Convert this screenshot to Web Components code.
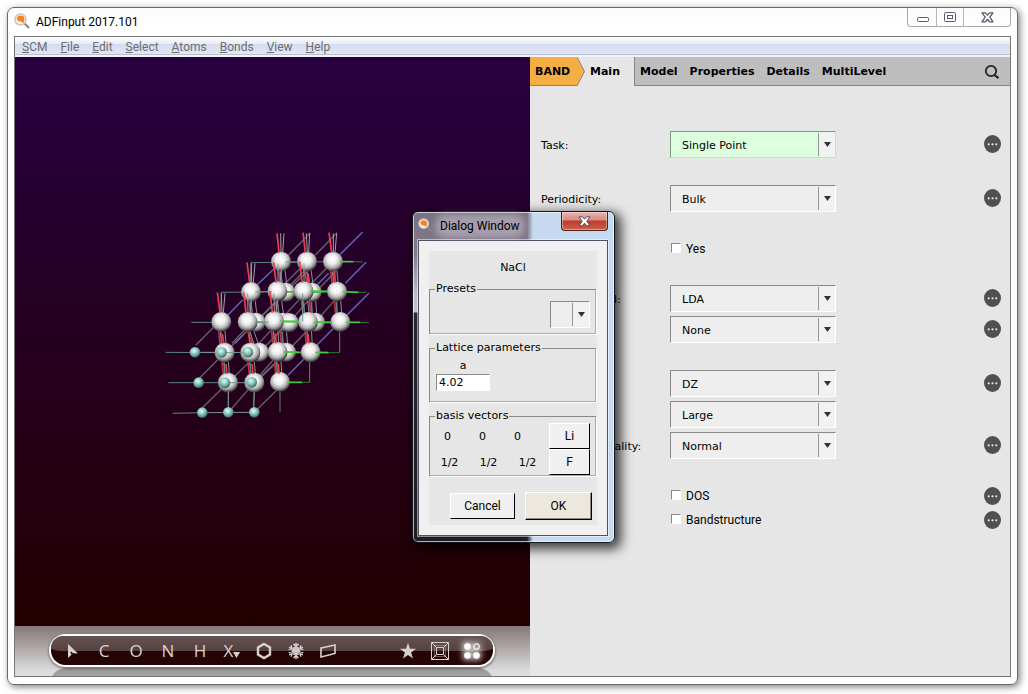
<!DOCTYPE html>
<html lang="en">
<head>
<meta charset="utf-8">
<title>ADFinput 2017.101</title>
<style>
html, body { margin: 0; background: #fff; }
body { font: 12px/16px Roboto, "Noto Sans", sans-serif; color: #000; }
</style>
</head>
<body>
<adf-window heading="ADFinput 2017.101">
  <adf-menubar slot="menu" items="SCM,File,Edit,Select,Atoms,Bonds,View,Help"></adf-menubar>
  <adf-viewer></adf-viewer>
  <adf-panel>
    <adf-tabs slot="tabs" items="Model,Properties,Details,MultiLevel"></adf-tabs>
    <adf-group>
      <adf-field label="Task:" value="Single Point" tone="changed" more></adf-field>
    </adf-group>
    <adf-group>
      <adf-field label="Periodicity:" value="Bulk" more></adf-field>
    </adf-group>
    <adf-group>
      <adf-check label="Yes"></adf-check>
    </adf-group>
    <adf-group>
      <adf-field label="XC &nbsp;functional:" value="LDA" more></adf-field>
      <adf-field name="Relativity" value="None" more></adf-field>
    </adf-group>
    <adf-group>
      <adf-field name="Basis set" value="DZ" more></adf-field>
      <adf-field name="Frozen core" value="Large"></adf-field>
      <adf-field label="Numerical quality:" value="Normal" more></adf-field>
    </adf-group>
    <adf-group class="checks">
      <adf-check label="DOS" more></adf-check>
      <adf-check label="Bandstructure" more></adf-check>
    </adf-group>
  </adf-panel>
  <adf-dialog slot="dialog" heading="Dialog Window"></adf-dialog>
</adf-window>

<script>
const define = (name, render) => customElements.define(name, class extends HTMLElement {
  constructor() {
    super();
    this.attachShadow({ mode: 'open' });
  }
  connectedCallback() {
    this.shadowRoot.innerHTML = render(this);
  }
});

const base = `
  * { box-sizing: border-box; }
  button { font: inherit; color: inherit; background: none; border: 0; padding: 0; margin: 0; }
  svg { display: block; }
`;

const logo = `<svg width="16" height="16" viewBox="0 0 16 16" aria-hidden="true">
  <path d="M10.500 10.500 15 15" stroke="#8b8682" stroke-width="2"/>
  <circle cx="6.500" cy="6.500" r="5.500" fill="#f6f3ef" stroke="#c4c2c0" stroke-width="1.400"/>
  <path d="M2.500 5 5 2.500 9.500 3 10.500 6.500 9.500 10 7 8.500 4 8Z" fill="#f5821f"/>
</svg>`;

/* ---------- main window ---------- */
define('adf-window', el => `
<style>${base}
  :host { display: flex; flex-direction: column; min-height: 100vh; box-sizing: border-box; padding: 7px 10px 9px 7px; position: relative; }
  .frame { flex: 1; display: flex; flex-direction: column; padding: 0 6px 7px; border: 1px solid #696969; border-radius: 7px; background: linear-gradient(#fcfcfc, #fff 20px); box-shadow: 2px 2px 7px rgba(0,0,0,.5); }
  header { height: 28px; display: flex; align-items: flex-start; gap: 6px; }
  .logo { margin-top: 5px; }
  h1 { flex: 1; margin: 6px 0 0; font: inherit; }
  .controls { display: flex; height: 19px; border: 1px solid #a9a9a9; border-top: 0; border-radius: 0 0 4px 4px; }
  .controls button { display: grid; place-items: center; width: 28px; }
  .controls button + button { width: 27px; border-left: 1px solid #b5b5b5; }
  .controls button:last-child { width: 47px; }
  .client { flex: 1; display: grid; grid-template: auto 1fr / 515fr 480fr; border: 1px solid #777; }
  slot[name=menu]::slotted(*) { grid-column: 1 / -1; }
</style>
<div class="frame">
  <header>
    <span class="logo">${logo}</span>
    <h1>${el.getAttribute('heading')}</h1>
    <div class="controls">
      <button aria-label="Minimize"><svg width="13" height="11"><rect x="1.500" y="5.500" width="11" height="4" rx="1" fill="#fff" stroke="#575b6b"/></svg></button>
      <button aria-label="Maximize"><svg width="13" height="11"><rect x=".5" y=".5" width="11" height="9" rx="1" fill="#fff" stroke="#575b6b"/><rect x="3.500" y="3.500" width="5" height="3" fill="#fff" stroke="#575b6b"/></svg></button>
      <button aria-label="Close"><svg width="13" height="11" viewBox="0 0 13 11"><path d="M1 .8h3.500l2 2.400 2-2.400H12L8.800 5.200 12 9.800H8.500l-2-2.600-2 2.600H1l3.200-4.600Z" fill="#fff" stroke="#575b6b" stroke-width="1.300" stroke-linejoin="round"/></svg></button>
    </div>
  </header>
  <div class="client"><slot name="menu"></slot><slot></slot></div>
</div>
<slot name="dialog"></slot>`);

define('adf-menubar', el => `
<style>${base}
  :host { display: block; color: #6d6d6d; }
  nav { display: flex; gap: 13px; height: 20px; padding: 2px 7px 0; background: linear-gradient(#fff, #e7ebf6 7px, #d5dcf0 7px, #e0e6f5 17px, #b6bcd4 17px, #b6bcd4 18px, #f4f4f8 18px); }
  button { height: 16px; }
</style>
<nav>${el.getAttribute('items').split(',').map(t => `<button><u>${t[0]}</u>${t.slice(1)}</button>`).join('')}</nav>`);

/* ---------- 3D viewer ---------- */
// Scene coordinates are three units to one screen pixel.
const scene = () => {
  const line = (c, w, list) => `<g stroke="${c}" stroke-width="${w}">${list.map(([a, b, x, y]) => `<path d="M${a} ${b}L${x} ${y}"/>`).join('')}</g>`;
  const balls = (fill, r, list) => list.map(([x, y]) => `<circle cx="${x}" cy="${y}" r="${r}" fill="url(#${fill})"/>`).join('');
  const front = [[377,125],[455,125],[533,125],[287,216],[366,214],[445,214],[545,215],[198,306],[277,306],[356,304],[458,306],[555,306],[208,398],[285,398],[367,396],[466,397],[218,488],[297,488],[374,486]];
  const back = [[391,217],[470,217],[302,307],[382,307],[401,308],[480,307],[312,397],[393,397]];
  const small = [[119,397],[199,397],[278,396],[130,488],[209,488],[289,487],[141,578],[219,577],[297,577]];
  const bonds = [[377,125,391,217],[455,125,470,217],[533,125,545,215],[287,216,302,307],[366,214,382,307],[445,214,458,306],[470,217,480,307],[545,215,555,306],[198,306,208,398],[277,306,312,397],[356,304,367,396],[382,307,393,397],[458,306,466,397],[208,398,218,488],[285,398,297,488],[367,396,374,486]];
  const shift = (d, e) => bonds.map(([a, b, x, y]) => [a + d, b, x + e, y]);
  return `
  ${line('#6a606f', 4, [[122,375,190,306],[132,475,208,398],[208,398,302,307],[302,307,391,217],[391,217,470,140],[141,563,218,488],[218,488,312,397],[312,397,401,308],[401,308,480,217],[480,217,545,150],[219,577,297,488],[297,488,393,397],[393,397,480,307],[480,307,560,215],[297,577,374,500],[300,488,382,410],[285,398,366,310],[240,368,356,250],[366,310,458,210],[400,105,465,38],[480,105,545,38],[366,214,455,125],[445,214,533,125],[400,200,455,145],[230,370,287,310],[310,470,367,405]])}
  ${line('#6967bd', 4, [[555,103,622,36],[570,190,632,127],[575,285,641,219],[215,288,262,240],[305,195,366,137],[398,466,466,397],[485,375,535,325],[240,370,262,345],[485,195,520,160]])}
  ${line('#918998', 3, [...shift(-6, -6), ...shift(9, 6)])}
  ${line('#5c8580', 3, [...shift(-1, -10), [287,128,533,125],[198,217,445,214],[108,307,198,307],[31,397,208,398],[39,488,218,488],[52,580,141,578],[287,128,284,216],[198,217,195,306],[553,306,553,397],[463,397,463,487],[374,486,374,575],[219,488,219,577],[297,488,295,577]])}
  ${balls('white-ball', 29, back)}
  ${line('#ba3545', 5, [...shift(-10, -12)])}
  ${line('#39bd36', 5, [[366,214,440,217],[470,217,540,213],[287,306,350,307],[360,304,455,306],[458,306,550,308],[367,396,466,398]])}
  ${balls('white-ball', 30, front)}
  ${line('#ee3f50', 5, [[365,40,371,98],[443,38,450,98],[521,38,529,98],[275,127,283,188],[355,127,362,188],[433,125,440,188],[186,217,194,278],[265,217,272,278],[344,215,351,278],[201,342,205,370],[280,342,284,370],[360,340,363,370],[212,432,214,462],[290,432,293,462],[369,432,371,462],[458,342,461,370],[537,152,540,188],[458,160,462,188]])}
  ${line('#a4a0aa', 3, [[376,40,377,98],[386,40,382,98],[453,40,456,98],[463,40,460,98],[534,40,534,98],[544,40,539,98],[288,130,289,188],[299,130,294,188],[368,130,368,188],[378,150,374,188],[446,130,446,188],[198,220,200,278],[209,220,204,278],[277,220,278,278],[288,240,284,278],[356,220,357,278],[366,240,362,278]])}
  ${line('#42cb3e', 5, [[555,125,595,125],[562,215,610,217],[572,307,615,307],[480,397,520,398],[395,487,440,487],[465,213,515,214],[385,396,430,397],[375,304,430,304],[475,307,530,307]])}
  ${line('#317b31', 3, [[595,125,622,126],[610,217,632,217],[615,307,641,308],[520,398,553,398],[440,487,463,487]])}
  ${line('#779591', 3, [[209,398,270,397],[218,488,280,488],[155,578,285,577],[119,397,190,397],[300,307,340,306],[219,515,219,560],[297,515,295,560],[442,220,442,305],[300,216,350,215],[390,126,430,126]])}
  ${balls('teal-ball', 16, small)}`;
};

define('adf-viewer', () => `
<style>${base}
  :host { display: flex; flex-direction: column; min-width: 0; }
  .scene { flex: 1; display: grid; place-items: center; padding-bottom: 34px; background: linear-gradient(#280040, #220000); }
</style>
<div class="scene">
  <svg width="235" height="210" viewBox="-1 0 705 630" role="img" aria-label="Crystal structure" fill="none">
    <defs>
      <radialGradient id="white-ball" cx=".46" cy=".38" r=".6"><stop offset="0" stop-color="#fff"/><stop offset=".4" stop-color="#eee"/><stop offset=".7" stop-color="#b2b2b2"/><stop offset=".9" stop-color="#606060"/><stop offset="1" stop-color="#2c2c2c"/></radialGradient>
      <radialGradient id="teal-ball" cx=".42" cy=".36" r=".65"><stop offset="0" stop-color="#d8fff6"/><stop offset=".4" stop-color="#98d3c8"/><stop offset=".8" stop-color="#5b9087"/><stop offset="1" stop-color="#2a4a46"/></radialGradient>
    </defs>${scene()}
  </svg>
</div>
<adf-toolbar></adf-toolbar>`);

define('adf-toolbar', () => {
  const arm = [0, 60, 120, 180, 240, 300].map(a => `<path transform="rotate(${a} 9 9)" d="M9 9V1M6.500 2 9 4.500 11.500 2M7 5.200 9 7.200 11 5.200"/>`).join('');
  return `
<style>${base}
  :host { display: block; color: #d9d1d1; }
  .shelf { height: 50px; padding: 8px 35px 0 34px; overflow: hidden; background: linear-gradient(#857777, #dcdcdc 90%); }
  .pill { position: relative; display: flex; justify-content: space-between; height: 33px; padding: 0 5px; border: 2px solid #fff; border-radius: 17px; background: #250404; box-shadow: 0 1px 3px rgba(0,0,0,.6); }
  .pill::before { content: ""; position: absolute; inset: 0 0 auto; height: 15px; border-radius: 15px 15px 14px 14px / 15px 15px 4px 4px; background: linear-gradient(#665252, #564141); }
  .mirror { height: 20px; margin-top: 1px; border-radius: 17px 17px 0 0; border: 1px solid #d0cccc; border-top: 0; background: linear-gradient(#9a9494, #b9b5b5); }
  .set { display: flex; position: relative; }
  button { width: 32px; height: 29px; display: flex; align-items: center; justify-content: center; font: 500 17px/29px "Open Sans", sans-serif; }
  .pick svg { margin-top: 8px; }
  .lit { filter: drop-shadow(0 0 3px #fff) drop-shadow(0 0 3px rgba(255,255,255,.6)); }
</style>
<div class="shelf">
  <div class="pill" role="toolbar">
    <div class="set">
      <button aria-label="Select"><svg width="14" height="14" viewBox="0 0 14 14"><path d="M3 0 13 9.500 8 9.300 3 14Z" fill="currentColor"/><path d="m6 8 3 5" stroke="#250303" stroke-width="1.500"/></svg></button>
      <button>C</button><button>O</button><button>N</button><button>H</button>
      <button class="pick">X<svg width="7" height="6"><path d="M0 0h7L3.500 6Z" fill="currentColor"/></svg></button>
      <button aria-label="Rings"><svg width="16" height="18" viewBox="0 0 16 18"><path d="M8 2 14 5.500v7L8 16 2 12.500v-7Z" fill="none" stroke="currentColor" stroke-width="2.400"/></svg></button>
      <button aria-label="Crystal"><svg width="18" height="18" viewBox="0 0 18 18" fill="none" stroke="currentColor" stroke-width="1.400">${arm}</svg></button>
      <button aria-label="Slab"><svg width="16" height="16" viewBox="0 0 16 16"><path d="M1 5 15 2v8.500L1 14Z" fill="none" stroke="currentColor" stroke-width="1.600"/></svg></button>
    </div>
    <div class="set">
      <button aria-label="Favorites"><svg width="16" height="16" viewBox="0 0 16 16"><path d="m8 0 2 5.800h6l-4.900 3.700L13 15.500 8 11.900 3 15.500l1.900-6L0 5.800h6Z" fill="currentColor"/></svg></button>
      <button aria-label="Perspective"><svg width="18" height="18" viewBox="0 0 18 18" fill="none" stroke="currentColor"><path d="M.5.5h17v17H.5ZM5.500 5.500h7v7h-7ZM.5.5l5 5M17.500.5l-5 5M.5 17.500l5-5M17.500 17.500l-5-5"/><path d="M3.500 3.500h11v11h-11Z" opacity=".4"/></svg></button>
      <button class="lit" aria-label="Periodic view"><svg width="16" height="16" viewBox="0 0 16 16" fill="#fff"><circle cx="3.500" cy="3.500" r="3.300"/><circle cx="12.500" cy="3.500" r="2.700" fill="none" stroke="#eee" stroke-width="1.300"/><circle cx="3.500" cy="12.500" r="3.300"/><circle cx="12.500" cy="12.500" r="3.300"/></svg></button>
    </div>
  </div>
  <div class="mirror"></div>
</div>`;
});

/* ---------- input panel ---------- */
define('adf-panel', () => `
<style>${base}
  :host { display: block; min-width: 0; background: #e6e6e6; }
  form { display: flex; flex-direction: column; gap: 27px; margin: 0; padding: 45px 9px 0 11px; }
</style>
<slot name="tabs"></slot>
<form><slot></slot></form>`);

define('adf-group', () => `
<style>
  :host { display: flex; flex-direction: column; gap: 4px; }
  :host(.checks) { gap: 5px; }
</style><slot></slot>`);

define('adf-tabs', el => `
<style>${base}
  :host { display: block; font: bold 11px/16px "DejaVu Sans", sans-serif; }
  nav { display: flex; height: 29px; background: #bebebe; border-bottom: 1px solid #858585; }
  nav button { padding-top: 1px; }
  .root { display: flex; height: 29px; }
  .root button { background: #f5ae42; padding-left: 5px; width: 47px; text-align: left; border-bottom: 1px solid #858585; height: 29px; }
  .active { display: flex; width: 105px; height: 29px; background: #e6e6e6; border-right: 1px solid #858585; }
  .active > button { height: 28px; padding-left: 5px; }
  .rest { flex: 1; display: flex; gap: 12px; padding-left: 5px; }
  .find { width: 36px; display: grid; place-items: center; }
</style>
<nav>
  <div class="active">
    <div class="root"><button>BAND</button><svg width="8" height="29"><path d="M0 0 7.500 14.500 0 29Z" fill="#f5ae42"/><path d="M0 0 7.500 14.500 0 29" fill="none" stroke="#858585"/></svg></div>
    <button>Main</button>
  </div>
  <div class="rest">${el.getAttribute('items').split(',').map(t => `<button>${t}</button>`).join('')}</div>
  <button class="find" aria-label="Search"><svg width="16" height="16" viewBox="0 0 16 16" fill="none" stroke="#222"><circle cx="7" cy="7" r="5.200" stroke-width="1.800"/><path d="m10.500 11 4 3.200" stroke-width="2.200"/></svg></button>
</nav>`);

define('adf-more', () => `
<style>${base}
  :host { display: block; }
  button { display: block; width: 17px; height: 18px; }
</style>
<button type="button" aria-label="More options"><svg width="17" height="18" viewBox="0 0 17 18"><ellipse cx="8.500" cy="9" rx="8.500" ry="9" fill="#505050"/><g fill="#e6e6e6"><circle cx="4.700" cy="9.300" r="1.100"/><circle cx="8.500" cy="9.300" r="1.100"/><circle cx="12.300" cy="9.300" r="1.100"/></g></svg></button>`);

define('adf-field', el => `
<style>${base}
  :host { display: flex; align-items: center; min-height: 27px; font: 11px/16px "DejaVu Sans", sans-serif; }
  label { flex: 0 0 129px; padding-top: 2px; white-space: nowrap; }
  .combo { flex: 0 0 166px; display: grid; grid-template-columns: 1fr 17px; height: 27px; border: 1px solid; border-color: #8a8a8a #fff #fff #8a8a8a; background: #eee; }
  :host([tone=changed]) .combo { background: #dfd; border-color: #7f9a7f #b9eab9 #b9eab9 #7f9a7f; }
  select { grid-area: 1 / 1 / 2 / 3; appearance: none; width: 100%; height: 25px; border: 0; padding: 2px 20px 0 11px; margin: 0; background: none; font: inherit; color: inherit; }
  .arrow { grid-area: 1 / 2; display: grid; place-items: center; background: #f2f2f2; margin: 1px 0; border-left: 1px solid #959595; pointer-events: none; }
  adf-more { margin: 0 0 2px auto; }
</style>
<label for="s">${el.getAttribute('label') || ''}</label>
<div class="combo"><select id="s"${el.hasAttribute('name') ? ` aria-label="${el.getAttribute('name')}"` : ''}><option>${el.getAttribute('value')}</option></select><span class="arrow"><svg width="7" height="5"><path d="M0 0h7L3.500 5Z" fill="#333"/></svg></span></div>
${el.hasAttribute('more') ? '<adf-more></adf-more>' : ''}`);

define('adf-check', el => `
<style>${base}
  :host { display: flex; align-items: center; height: 19px; padding-left: 130px; }
  label { display: flex; align-items: center; gap: 5px; }
  input { appearance: none; width: 10px; height: 10px; margin: 0 0 1px; background: #fff; border: 1px solid; border-color: #8a8a8a #fff #fff #8a8a8a; }
  adf-more { margin-left: auto; }
</style>
<label><input type="checkbox"><span>${el.getAttribute('label')}</span></label>
${el.hasAttribute('more') ? '<adf-more></adf-more>' : ''}`);

/* ---------- floating dialog ---------- */
define('adf-dialog', el => `
<style>${base}
  :host { position: absolute; left: calc(50% - 102px); top: 211px; width: 203px; font: 11px/14px "DejaVu Sans", sans-serif; }
  .frame { padding: 0 6px 6px 5px; border: 1px solid #14171d; border-radius: 6px;
    box-shadow: inset 0 0 0 1px rgba(255,255,255,.65), 4px 4px 12px 2px rgba(0,0,0,.75);
    background: linear-gradient(90deg, transparent 114px, #c5daf0 120px), linear-gradient(#7a7183, #81788a 40px, #bcb7c2 80px, #c5c0ca 100px, #2a2632 101px, #201c26); }
  header { display: flex; align-items: flex-start; height: 28px; font: 12px/16px Roboto, "Noto Sans", sans-serif; }
  .logo { margin-top: 5px; }
  .logo svg { width: 14px; }
  h2 { flex: 1; margin: 6px 0 0 8px; font: inherit; white-space: nowrap; }
  h2 span { background: rgba(205,200,212,.5); box-shadow: 0 0 6px 5px rgba(205,200,212,.5); border-radius: 6px; }
  .close { width: 47px; height: 19px; display: grid; place-items: center; border: 1px solid #4a1d20; border-top: 0; border-radius: 0 0 4px 4px; background: linear-gradient(#eab3ad, #d98a82 8px, #bb3c2c 9px, #cf6046); box-shadow: inset 0 0 0 1px rgba(255,255,255,.4); }
  .client { padding: 10px; border: 1px solid #4d5461; background: #f0f0f0; outline: 1px solid rgba(255,255,255,.5); }
  form { margin: 0; background: #e6e6e6; height: 274px; }
  .name { height: 31px; margin: 0; padding-top: 10px; text-align: center; }
  fieldset { min-width: 0; margin: 0 0 6px; padding: 0; border: 1px solid #8a8a8a; border-right: 2px groove #fff; border-bottom: 2px groove #fff; }
  legend { height: 14px; margin-left: 5px; padding: 0 1px; }
  .presets { height: 53px; }
  .lattice { height: 62px; }
  .basis { height: 68px; }
  .mini { width: 40px; height: 27px; margin: 5px 5px 0 auto; display: grid; grid-template-columns: 1fr 17px; border: 1px solid; border-color: #8a8a8a #fff #fff #8a8a8a; background: #eee; }
  .mini select { grid-area: 1 / 1 / 2 / 3; appearance: none; border: 0; padding: 0; background: none; width: 100%; }
  .mini span { grid-area: 1 / 2; display: grid; place-items: center; margin: 1px 0; background: #f2f2f2; border-left: 1px solid #959595; pointer-events: none; }
  .param { display: block; width: 54px; margin: 4px 0 0 6px; text-align: center; }
  .param input { display: block; width: 54px; height: 17px; margin-top: 1px; padding: 0 2px; border: 1px solid; border-color: #8a8a8a #fff #fff #8a8a8a; border-radius: 0; background: #fff; font: inherit; outline: 0; }
  .vector { display: grid; height: 26px; align-items: center; text-align: center; padding-right: 5px; }
  .vector span { padding-top: 1px; }
  .v1 { grid-template-columns: repeat(3, 35px) 1fr; }
  .v2 { grid-template-columns: repeat(3, 39px) 1fr; }
  .vector button, .cancel, .ok { font: 12px/16px Roboto, "Noto Sans", sans-serif; background: #f0f0f0; border: 1px solid; border-color: #fff #000 #000 #fff; }
  .vector button { width: 41px; height: 26px; margin-left: auto; }
  footer { display: flex; justify-content: flex-end; align-items: center; gap: 10px; padding: 9px 5px 0 0; }
  .cancel { width: 65px; height: 26px; }
  .ok { width: 67px; height: 28px; background: #ece8dd; box-shadow: inset -1px -1px 0 #8d897d; }
</style>
<div class="frame" role="dialog" aria-label="${el.getAttribute('heading')}">
  <header><span class="logo">${logo}</span><h2><span>${el.getAttribute('heading')}</span></h2>
    <button class="close" aria-label="Close"><svg width="13" height="11" viewBox="0 0 13 11"><path d="M1 .8h3.500l2 2.400 2-2.400H12L8.800 5.200 12 9.800H8.500l-2-2.600-2 2.600H1l3.200-4.600Z" fill="#fff" stroke="#4a4e60"/></svg></button>
  </header>
  <div class="client"><form onsubmit="return false">
    <p class="name">NaCl</p>
    <fieldset class="presets"><legend>Presets</legend>
      <div class="mini"><select aria-label="Presets"><option></option></select><span><svg width="7" height="5"><path d="M0 0h7L3.500 5Z" fill="#333"/></svg></span></div>
    </fieldset>
    <fieldset class="lattice"><legend>Lattice parameters</legend>
      <label class="param">a<input value="4.02"></label>
    </fieldset>
    <fieldset class="basis"><legend>basis vectors</legend>
      <div class="vector v1"><span>0</span><span>0</span><span>0</span><button type="button">Li</button></div>
      <div class="vector v2"><span>1/2</span><span>1/2</span><span>1/2</span><button type="button">F</button></div>
    </fieldset>
    <footer><button type="button" class="cancel">Cancel</button><button class="ok">OK</button></footer>
  </form></div>
</div>`);
</script>
</body>
</html>
